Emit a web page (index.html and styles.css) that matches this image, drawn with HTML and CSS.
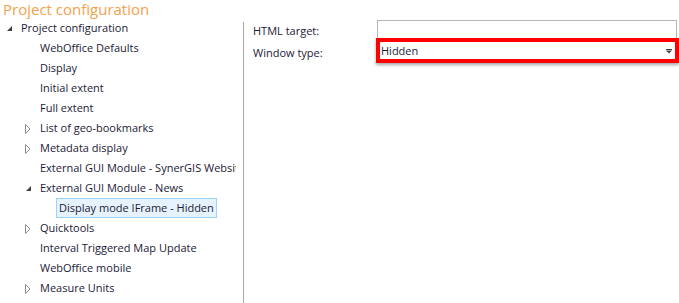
FILE: index.html
```html
<!DOCTYPE html>
<html>
<head>
<meta charset="utf-8">
<link rel="stylesheet" href="styles.css">
</head>
<body>
<div class="title">Project configuration</div>
<div class="main">
  <div class="tree">
    <div class="row l0"><span class="exp"><svg width="8" height="8" viewBox="0 0 8 8"><polygon points="6,1 6,6 1,6" class="tri-open"/></svg></span><span class="txt">Project configuration</span></div>
    <div class="row l1"><span class="exp"></span><span class="txt">WebOffice Defaults</span></div>
    <div class="row l1"><span class="exp"></span><span class="txt">Display</span></div>
    <div class="row l1"><span class="exp"></span><span class="txt">Initial extent</span></div>
    <div class="row l1"><span class="exp"></span><span class="txt">Full extent</span></div>
    <div class="row l1"><span class="exp"><svg width="8" height="10" viewBox="0 0 8 10"><polygon points="0.5,0.5 5,5 0.5,9.5" class="tri-closed"/></svg></span><span class="txt">List of geo-bookmarks</span></div>
    <div class="row l1"><span class="exp"><svg width="8" height="10" viewBox="0 0 8 10"><polygon points="0.5,0.5 5,5 0.5,9.5" class="tri-closed"/></svg></span><span class="txt">Metadata display</span></div>
    <div class="row l1"><span class="exp"></span><span class="txt">External GUI Module - SynerGIS Website</span></div>
    <div class="row l1"><span class="exp"><svg width="8" height="8" viewBox="0 0 8 8"><polygon points="6,1 6,6 1,6" class="tri-open"/></svg></span><span class="txt">External GUI Module - News</span></div>
    <div class="row l2"><span class="exp"></span><span class="txt sel">Display mode IFrame - Hidden</span></div>
    <div class="row l1"><span class="exp"><svg width="8" height="10" viewBox="0 0 8 10"><polygon points="0.5,0.5 5,5 0.5,9.5" class="tri-closed"/></svg></span><span class="txt">Quicktools</span></div>
    <div class="row l1"><span class="exp"></span><span class="txt">Interval Triggered Map Update</span></div>
    <div class="row l1"><span class="exp"></span><span class="txt">WebOffice mobile</span></div>
    <div class="row l1"><span class="exp"><svg width="8" height="10" viewBox="0 0 8 10"><polygon points="0.5,0.5 5,5 0.5,9.5" class="tri-closed"/></svg></span><span class="txt">Measure Units</span></div>
  </div>
  <div class="divider"></div>
  <div class="props">
    <div class="label">HTML target:</div>
    <div class="input"></div>
    <div class="label">Window type:</div>
    <div class="select">
      <span class="val">Hidden</span>
      <svg class="drop" width="6" height="5" viewBox="0 0 6 5"><rect x="0" y="0" width="6" height="1" fill="#454545"/><polygon points="0,1.5 6,1.5 3,4.5" fill="#454545"/></svg>
    </div>
  </div>
</div>
</body>
</html>
```
FILE: styles.css
```css
html, body {
  margin: 0;
  padding: 0;
  background: #ffffff;
  overflow: hidden;
}
body {
  width: 679px;
  height: 303px;
  font-family: "Open Sans", "Noto Sans", "DejaVu Sans", sans-serif;
  font-size: 11px;
  color: #1c1a36;
}
.title {
  height: 18px;
  line-height: 18px;
  padding-left: 3px;
  font-size: 15px;
  color: #f4a24c;
  white-space: nowrap;
}
.main {
  display: flex;
  align-items: flex-start;
  height: 285px;
}
.tree {
  width: 236px;
  overflow: hidden;
  flex: none;
}
.row {
  height: 20px;
  display: flex;
  align-items: center;
  white-space: nowrap;
}
.row.l0 { padding-left: 4px; }
.row.l1 { padding-left: 23px; }
.row.l2 { padding-left: 42px; }
.exp {
  width: 17px;
  flex: none;
  display: flex;
  align-items: center;
  padding-left: 2px;
  box-sizing: border-box;
}
.exp svg { display: block; }
.tri-open { fill: #404040; }
.tri-closed { fill: none; stroke: #8e8e8e; stroke-width: 1; }
.l0 .exp svg, .l1 .exp svg { margin-top: 1px; }
.txt { line-height: 18px; }
.sel {
  margin-left: -3px;
  padding: 0 2px;
  border: 1px solid #99d4f7;
  background: #e6f3fc;
  height: 18px;
  line-height: 18px;
}
.divider {
  width: 1px;
  height: 281px;
  margin-top: 4px;
  margin-left: 7px;
  background: #a8a8a8;
  flex: none;
}
.props {
  flex: 1;
  padding-top: 2px;
  padding-left: 9px;
  display: grid;
  grid-template-columns: 124px 302px;
  grid-template-rows: 21px 20px;
  row-gap: 1px;
  align-items: center;
}
.label {
  white-space: nowrap;
}
.input {
  height: 21px;
  width: 300px;
  box-sizing: border-box;
  border: 1px solid #b4b4b4;
  border-bottom: none;
  align-self: start;
}
.select {
  position: relative;
  margin-left: -1px;
  width: 303px;
  height: 25px;
  margin-top: -3px;
  box-sizing: border-box;
  border: 4px solid #ff0000;
  background: #ffffff;
  box-shadow: 0 2px 3px rgba(0, 0, 0, 0.35);
  display: flex;
  align-items: center;
  justify-content: space-between;
  padding-left: 1px;
  padding-right: 3px;
}
.val { line-height: 17px; }
.drop { display: block; margin-top: 1px; }
```
